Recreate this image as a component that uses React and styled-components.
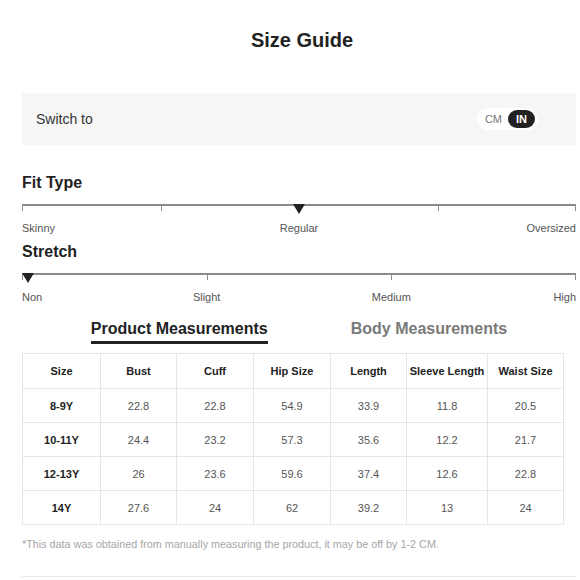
import styled, { createGlobalStyle } from 'styled-components';

const GlobalStyle = createGlobalStyle`
  body {
    margin: 0;
    background: #fff;
    font-family: "Liberation Sans", Arial, sans-serif;
    color: #222;
  }
`;

const Page = styled.div`
  width: 580px;
  box-sizing: border-box;
  padding: 0 4px 0 22px;
`;

const Title = styled.h2`
  margin: 0;
  padding: 30px 0 0 6px;
  font-size: 20px;
  line-height: 20px;
  font-weight: 700;
  text-align: center;
  color: #222;
`;

const SwitchPanel = styled.div`
  margin-top: 43px;
  height: 52px;
  background: #f6f6f6;
  display: flex;
  align-items: center;
  justify-content: space-between;
  padding: 0 38px 0 14px;
`;

const SwitchLabel = styled.span`
  font-size: 14px;
  color: #333;
`;

const Toggle = styled.div`
  display: flex;
  align-items: center;
  gap: 6px;
  height: 22px;
  box-sizing: border-box;
  padding: 2px 3px 2px 8px;
  background: #fff;
  border-radius: 11px;
`;

const ToggleOption = styled.span`
  font-size: 11px;
  line-height: 18px;
  height: 18px;
  padding: ${p => (p.active ? '0 8px' : '0')};
  border-radius: 9px;
  font-weight: ${p => (p.active ? 700 : 400)};
  color: ${p => (p.active ? '#fff' : '#777')};
  background: ${p => (p.active ? '#222' : 'transparent')};
`;

const SectionTitle = styled.h3`
  margin: ${p => p.top}px 0 0;
  font-size: 16px;
  line-height: 20px;
  font-weight: 700;
  color: #222;
`;

const Track = styled.div`
  position: relative;
  margin-top: ${p => p.top}px;
  display: grid;
  grid-template-columns: repeat(${p => p.steps}, 1fr);
`;

const Segment = styled.div`
  height: 5px;
  border-top: 2px solid #8a8a8a;
  border-left: 1px solid #8a8a8a;
  border-right: ${p => (p.last ? '1px solid #8a8a8a' : 'none')};
`;

const Pointer = styled.svg`
  position: absolute;
  top: 0;
  display: block;
`;

const Labels = styled.div`
  margin-top: ${p => p.top}px;
  display: grid;
  grid-template-columns: repeat(${p => p.steps * 2}, 1fr);
  font-size: 11px;
  line-height: 14px;
  color: #555;
  white-space: nowrap;
`;

const Label = styled.span`
  grid-column: ${p => p.col};
  justify-self: ${p => p.align};
`;

const Tabs = styled.div`
  margin-top: 15px;
  display: flex;
  justify-content: center;
  gap: 83px;
`;

const Tab = styled.div`
  font-size: 16px;
  line-height: 20px;
  font-weight: 700;
  padding-bottom: 2px;
  color: ${p => (p.active ? '#222' : '#7a7a7a')};
  border-bottom: 3px solid ${p => (p.active ? '#222' : 'transparent')};
`;

const Table = styled.table`
  margin-top: 9px;
  width: 541px;
  table-layout: fixed;
  border-collapse: collapse;
  font-size: 11px;
`;

const Cell = styled.td`
  height: ${p => (p.as === 'th' ? 34 : 33)}px;
  padding: 0;
  text-align: center;
  border: 1px solid #e6e6e6;
  font-weight: ${p => (p.bold ? 700 : 400)};
  color: ${p => (p.bold ? '#222' : '#555')};
`;

const Note = styled.p`
  margin: 12px 0 0;
  font-size: 10.8px;
  line-height: 14px;
  color: #a6a6a6;
`;

const Divider = styled.div`
  margin-top: 25px;
  border-top: 1px solid #e8e8e8;
`;

const Scale = ({ steps, active, labels, trackTop, labelTop }) => {
  const p = active / steps;
  return (
    <>
      <Track steps={steps} top={trackTop}>
        {Array.from({ length: steps }).map((_, i) => (
          <Segment key={i} last={i === steps - 1} />
        ))}
        <Pointer
          width="12"
          height="10"
          viewBox="0 0 12 10"
          style={{ left: `${p * 100}%`, transform: `translateX(-${p * 100}%)` }}
        >
          <polygon points="0,0 12,0 6,10" fill="#222" />
        </Pointer>
      </Track>
      <Labels steps={steps} top={labelTop}>
        {labels.map(([text, tick]) => {
          if (tick === 0) return <Label key={text} col="1" align="start">{text}</Label>;
          if (tick === steps) return <Label key={text} col={`${steps * 2}`} align="end">{text}</Label>;
          return <Label key={text} col={`${tick * 2} / span 2`} align="center">{text}</Label>;
        })}
      </Labels>
    </>
  );
};

const columns = ['Size', 'Bust', 'Cuff', 'Hip Size', 'Length', 'Sleeve Length', 'Waist Size'];
const widths = [78, 76, 77, 77, 76, 81, 76];
const rows = [
  ['8-9Y', '22.8', '22.8', '54.9', '33.9', '11.8', '20.5'],
  ['10-11Y', '24.4', '23.2', '57.3', '35.6', '12.2', '21.7'],
  ['12-13Y', '26', '23.6', '59.6', '37.4', '12.6', '22.8'],
  ['14Y', '27.6', '24', '62', '39.2', '13', '24'],
];

const App = () => {
  return (
    <Page>
      <GlobalStyle />
      <Title>Size Guide</Title>
      <SwitchPanel>
        <SwitchLabel>Switch to</SwitchLabel>
        <Toggle>
          <ToggleOption>CM</ToggleOption>
          <ToggleOption active>IN</ToggleOption>
        </Toggle>
      </SwitchPanel>

      <SectionTitle top={28}>Fit Type</SectionTitle>
      <Scale
        steps={4}
        active={2}
        trackTop={11}
        labelTop={10}
        labels={[['Skinny', 0], ['Regular', 2], ['Oversized', 4]]}
      />
      <SectionTitle top={7}>Stretch</SectionTitle>
      <Scale
        steps={3}
        active={0}
        trackTop={11}
        labelTop={10}
        labels={[['Non', 0], ['Slight', 1], ['Medium', 2], ['High', 3]]}
      />

      <Tabs>
        <Tab active>Product Measurements</Tab>
        <Tab>Body Measurements</Tab>
      </Tabs>

      <Table>
        <colgroup>
          {widths.map((w, i) => <col key={i} style={{ width: w }} />)}
        </colgroup>
        <thead>
          <tr>
            {columns.map(c => <Cell as="th" key={c} bold>{c}</Cell>)}
          </tr>
        </thead>
        <tbody>
          {rows.map(r => (
            <tr key={r[0]}>
              {r.map((v, i) => <Cell key={i} bold={i === 0}>{v}</Cell>)}
            </tr>
          ))}
        </tbody>
      </Table>

      <Note>*This data was obtained from manually measuring the product, it may be off by 1-2 CM.</Note>
      <Divider />
    </Page>
  );
};

export default App;
